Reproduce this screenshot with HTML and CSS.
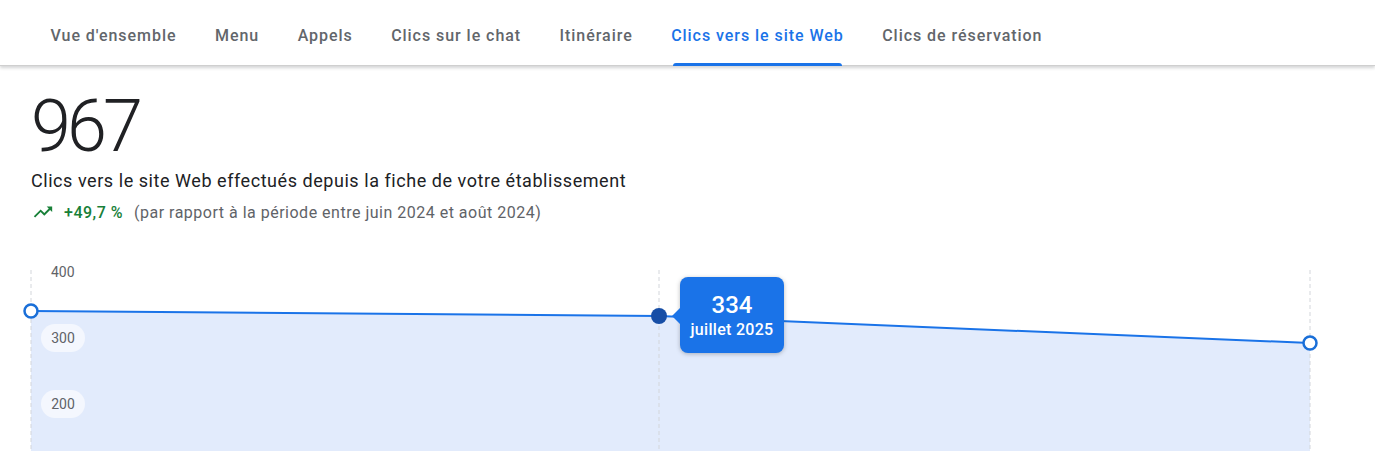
FILE: index.html
```html
<!DOCTYPE html>
<html lang="fr">
<head>
<meta charset="utf-8">
<link rel="stylesheet" href="styles.css">
</head>
<body>
<nav class="tabs">
  <a class="tab">Vue d'ensemble</a>
  <a class="tab">Menu</a>
  <a class="tab">Appels</a>
  <a class="tab">Clics sur le chat</a>
  <a class="tab">Itinéraire</a>
  <a class="tab active">Clics vers le site Web</a>
  <a class="tab">Clics de réservation</a>
</nav>
<main class="content">
  <div class="total">967</div>
  <div class="subtitle">Clics vers le site Web effectués depuis la fiche de votre établissement</div>
  <div class="trend">
    <svg class="trend-icon" viewBox="0 0 24 24" width="22" height="22"><path d="M16 6l2.29 2.29-4.88 4.88-4-4L2 16.59 3.41 18l6-6 4 4 6.3-6.29L22 12V6z" fill="#188038"/></svg>
    <span class="pct">+49,7 %</span>
    <span class="cmp">(par rapport à la période entre juin 2024 et août 2024)</span>
  </div>
</main>
<section class="chart">
  <svg class="chart-svg" width="1375" height="191" viewBox="0 0 1375 191">
    <polygon class="area" points="31,51 659,56 1310,83 1310,200 31,200"/>
    <line class="grid" x1="31" y1="10" x2="31" y2="191"/>
    <line class="grid" x1="659" y1="10" x2="659" y2="191"/>
    <line class="grid" x1="1310" y1="10" x2="1310" y2="191"/>
    <text class="axis" x="51" y="17">400</text>
    <rect class="pill" x="41" y="64" width="44" height="28" rx="14"/>
    <text class="axis" x="63" y="83" text-anchor="middle">300</text>
    <rect class="pill" x="41" y="130" width="44" height="28" rx="14"/>
    <text class="axis" x="63" y="149" text-anchor="middle">200</text>
    <polyline class="line" points="31,51 659,56 1310,83"/>
    <circle class="pt-open" cx="31" cy="51" r="6.5"/>
    <circle class="pt-open" cx="1310" cy="83" r="6.5"/>
    <circle class="pt-sel" cx="659" cy="56" r="8"/>
  </svg>
  <div class="tooltip">
    <div class="tip-value">334</div>
    <div class="tip-date">juillet 2025</div>
  </div>
</section>
</body>
</html>
```
FILE: styles.css
```css
html, body {
  margin: 0;
  padding: 0;
  background: #fff;
  font-family: Roboto, "Noto Sans", Arial, sans-serif;
  color: #202124;
  overflow: hidden;
}
.tabs {
  display: flex;
  height: 66px;
  padding: 6px 0 0 31px;
  box-shadow: 0 2px 3px rgba(60, 64, 67, 0.22);
  border-bottom: 1px solid #cfcfcf;
  box-sizing: border-box;
  position: relative;
}
.tab {
  display: flex;
  align-items: center;
  padding: 0 19px 0 19.5px;
  font-size: 16px;
  font-weight: 500;
  letter-spacing: 0.95px;
  color: #62666b;
  position: relative;
  white-space: nowrap;
}
.tab.active {
  color: #1a73e8;
}
.tab.active::after {
  content: "";
  position: absolute;
  left: 21px;
  right: 21px;
  bottom: -1px;
  height: 3px;
  border-radius: 3px 3px 0 0;
  background: #1a73e8;
}
.content {
  padding: 0 31px;
}
.total {
  font-size: 72px;
  font-weight: 300;
  line-height: 1;
  margin-top: 25px;
  color: #202124;
  letter-spacing: -4px;
}
.subtitle {
  margin-top: 6px;
  font-size: 18px;
  letter-spacing: 0.55px;
  line-height: 24px;
  color: #202124;
}
.trend {
  display: flex;
  align-items: center;
  margin-top: 7px;
  height: 24px;
  font-size: 16px;
  letter-spacing: 0.5px;
}
.trend-icon {
  margin: 0 10px 0 1px;
}
.pct {
  color: #188038;
  font-weight: 500;
  margin-right: 11px;
}
.cmp {
  color: #5f6368;
}
.chart {
  position: relative;
  margin-top: 36px;
  height: 191px;
}
.chart-svg {
  display: block;
}
.area {
  fill: #e2ebfc;
}
.grid {
  stroke: #d3d6db;
  stroke-width: 1;
  stroke-dasharray: 4 3;
}
.axis {
  font-family: Roboto, Arial, sans-serif;
  font-size: 14px;
  fill: #5f6368;
}
.pill {
  fill: #f4f7fe;
}
.line {
  fill: none;
  stroke: #1a73e8;
  stroke-width: 2;
}
.pt-open {
  fill: #fff;
  stroke: #1a6fd8;
  stroke-width: 2.5;
}
.pt-sel {
  fill: #174ea6;
}
.tooltip {
  position: absolute;
  left: 680px;
  top: 17px;
  width: 104px;
  height: 76px;
  background: #1a73e8;
  border-radius: 8px;
  color: #fff;
  display: flex;
  flex-direction: column;
  align-items: center;
  justify-content: center;
  box-shadow: 0 1px 4px rgba(60, 64, 67, 0.35);
}
.tooltip::before {
  content: "";
  position: absolute;
  left: -8px;
  top: 31px;
  border-top: 8px solid transparent;
  border-bottom: 8px solid transparent;
  border-right: 8px solid #1a73e8;
}
.tip-value {
  font-size: 24px;
  font-weight: 500;
  line-height: 30px;
}
.tip-date {
  font-size: 16px;
  font-weight: 500;
  letter-spacing: 0.3px;
  line-height: 20px;
}
```
